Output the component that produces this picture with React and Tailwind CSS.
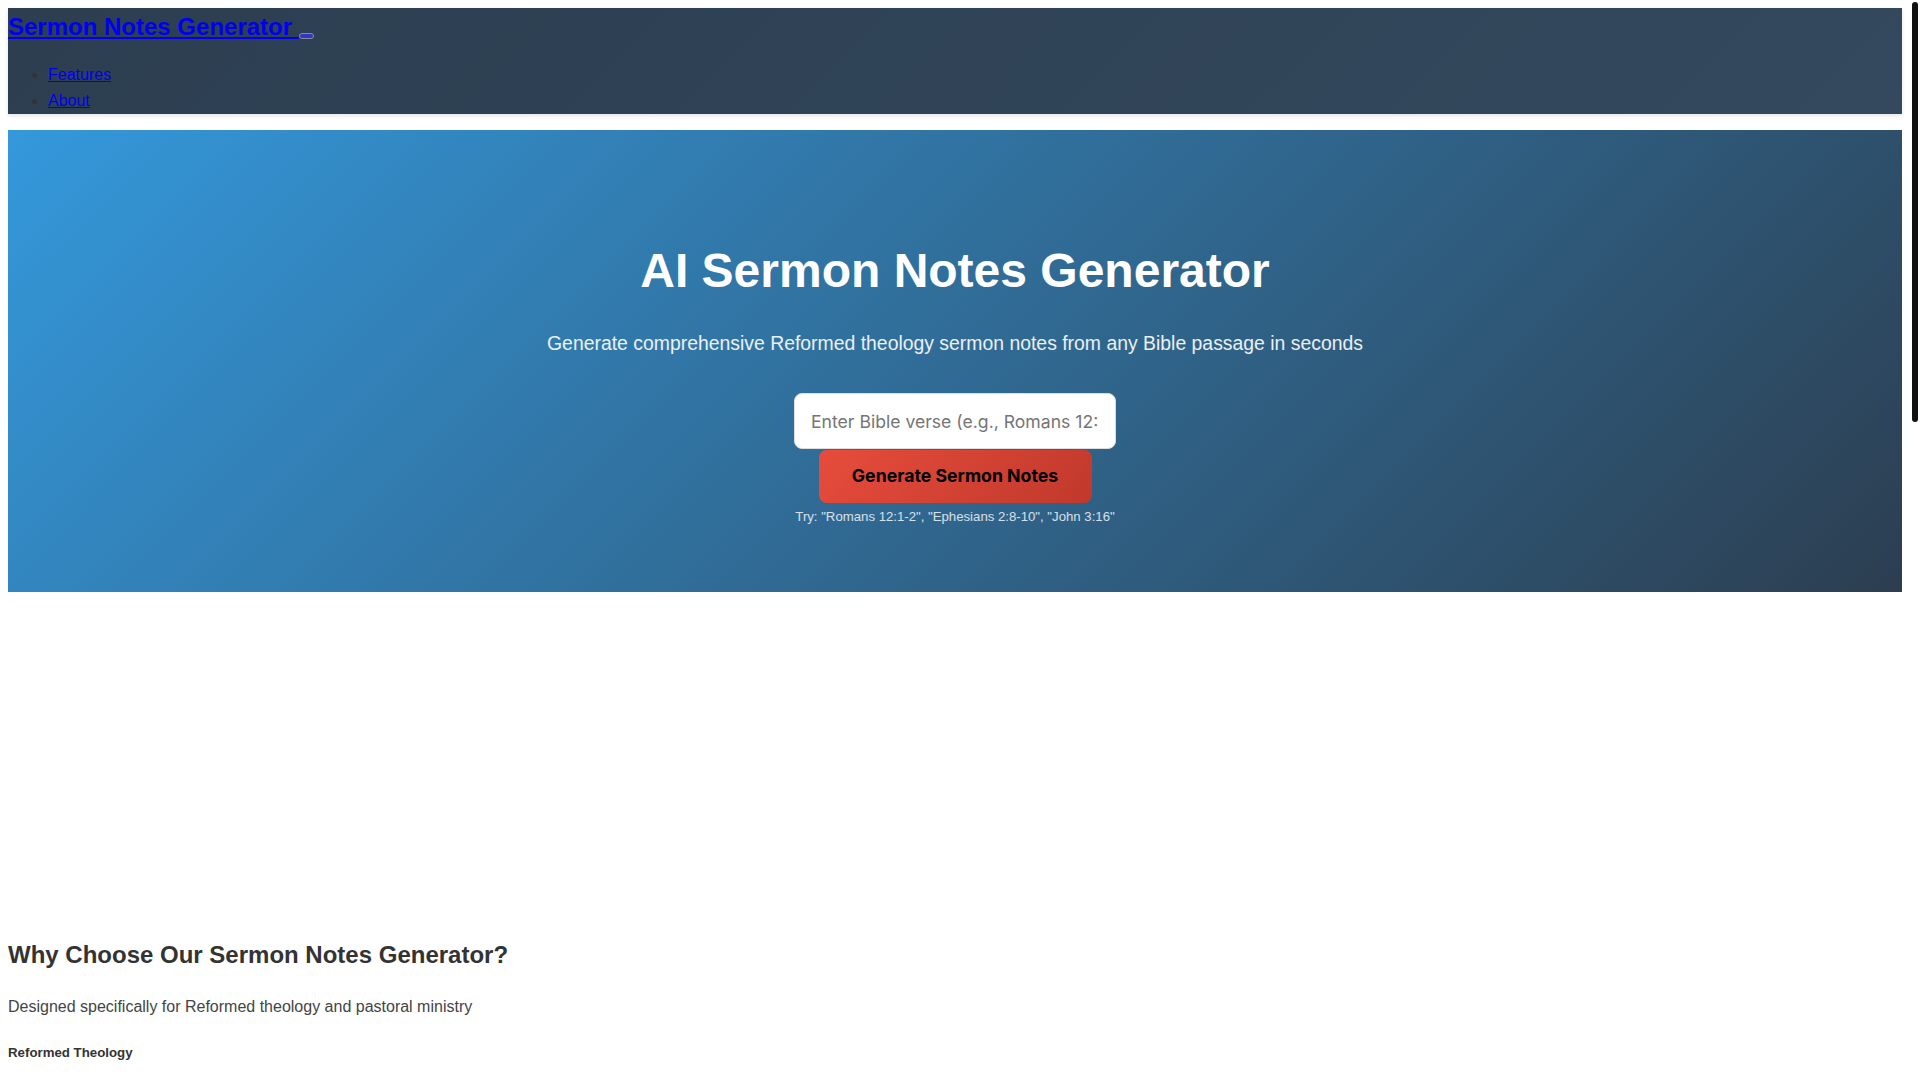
import React from "react";

const features = [
  ["Reformed Theology", "Every outline is grounded in the historic confessions and the doctrines of grace."],
  ["Expository Structure", "Notes follow the flow of the passage with clear main points and sub-points."],
  ["Cross References", "Related Scripture passages are gathered to support each point of the sermon."],
  ["Practical Application", "Each section closes with application for the congregation and daily life."],
  ["Historical Context", "Background on author, audience and setting helps you preach the text faithfully."],
  ["Instant Results", "Generate complete sermon notes in seconds and spend more time in prayer and study."],
];

export default function App() {
  return (
    <div className="flex h-screen w-full overflow-hidden bg-white">
      <div className="min-w-0 flex-1 overflow-hidden">
        <div className="min-h-[2751px] p-[8px] font-['Liberation_Sans',Arial,sans-serif] text-[#333]">
          <header className="h-[106px] bg-[linear-gradient(135deg,#2c3e50,#34495e)] shadow-[0_2px_4px_rgba(0,0,0,0.1)]">
            <div className="text-[24px] font-bold leading-[38px]">
              <a href="#" className="text-[#0000ee] underline">Sermon Notes Generator </a>
              <button className="inline-block h-[6px] w-[15px] rounded-full border border-[#8a8a9a] bg-[#3535c5] align-[-3px]" aria-label="Menu"></button>
            </div>
            <ul className="mt-[15.5px] list-disc pl-10 text-[16px] text-[#333]">
              <li className="leading-[26.4px]">
                <a href="#" className="text-[#0000ee] underline">Features</a>
              </li>
              <li className="leading-[26.4px]">
                <a href="#" className="text-[#0000ee] underline">About</a>
              </li>
            </ul>
          </header>

          <section className="mt-4 h-[462px] bg-[linear-gradient(135deg,#3498db,#2c3e50)] pt-[113px] text-center">
            <h1 className="mb-[34px] text-[48px] font-bold leading-[normal] text-white">AI Sermon Notes Generator</h1>
            <p className="mb-[38px] text-[19.4px] leading-[23px] text-white/90">
              Generate comprehensive Reformed theology sermon notes from any Bible passage in seconds
            </p>
            <input
              type="text"
              placeholder="Enter Bible verse (e.g., Romans 12:1-2)"
              className="mx-auto block h-[56px] w-[322px] rounded-lg border border-[#dddddd] bg-white px-4 font-['Inter',sans-serif] text-[17.6px] text-[#333] outline-none placeholder:text-[#757575]"
            />
            <button className="mx-auto mt-px block h-[53px] w-[273px] rounded-lg bg-[linear-gradient(135deg,#e74c3c,#c0392b)] font-['Inter',sans-serif] text-[17.7px] font-bold text-black">
              Generate Sermon Notes
            </button>
            <p className="mt-[6px] text-[13.2px] leading-[normal] text-white/80">
              Try: "Romans 12:1-2", "Ephesians 2:8-10", "John 3:16"
            </p>
          </section>

          <section className="mt-[349px]">
            <h2 className="text-[24px] font-bold leading-[normal] text-[#333]">Why Choose Our Sermon Notes Generator?</h2>
            <p className="mt-[29px] text-[16px] leading-[normal] text-[#444]">
              Designed specifically for Reformed theology and pastoral ministry
            </p>
            <div className="mt-[29px] flex flex-col gap-8">
              {features.map(([title, text]) => (
                <div key={title}>
                  <h5 className="text-[13.28px] font-bold leading-[normal] text-[#333]">{title}</h5>
                  <p className="mt-5 text-[16px] leading-[normal] text-[#444]">{text}</p>
                </div>
              ))}
            </div>
          </section>

          <section className="mt-20">
            <h2 className="text-[24px] font-bold leading-[normal] text-[#333]">About</h2>
            <p className="mt-6 text-[16px] leading-[normal] text-[#444]">
              Sermon Notes Generator helps pastors and teachers prepare faithful, Christ-centered sermons from any passage of Scripture.
            </p>
          </section>

          <footer className="mt-20 text-[14px] leading-[normal] text-[#666]">
            © 2024 Sermon Notes Generator. All rights reserved.
          </footer>
        </div>
      </div>
      <div className="w-[10px] shrink-0 bg-white px-[2px] pt-[2px]">
        <div className="h-[420px] rounded-full bg-[#111111]"></div>
      </div>
    </div>
  );
}
